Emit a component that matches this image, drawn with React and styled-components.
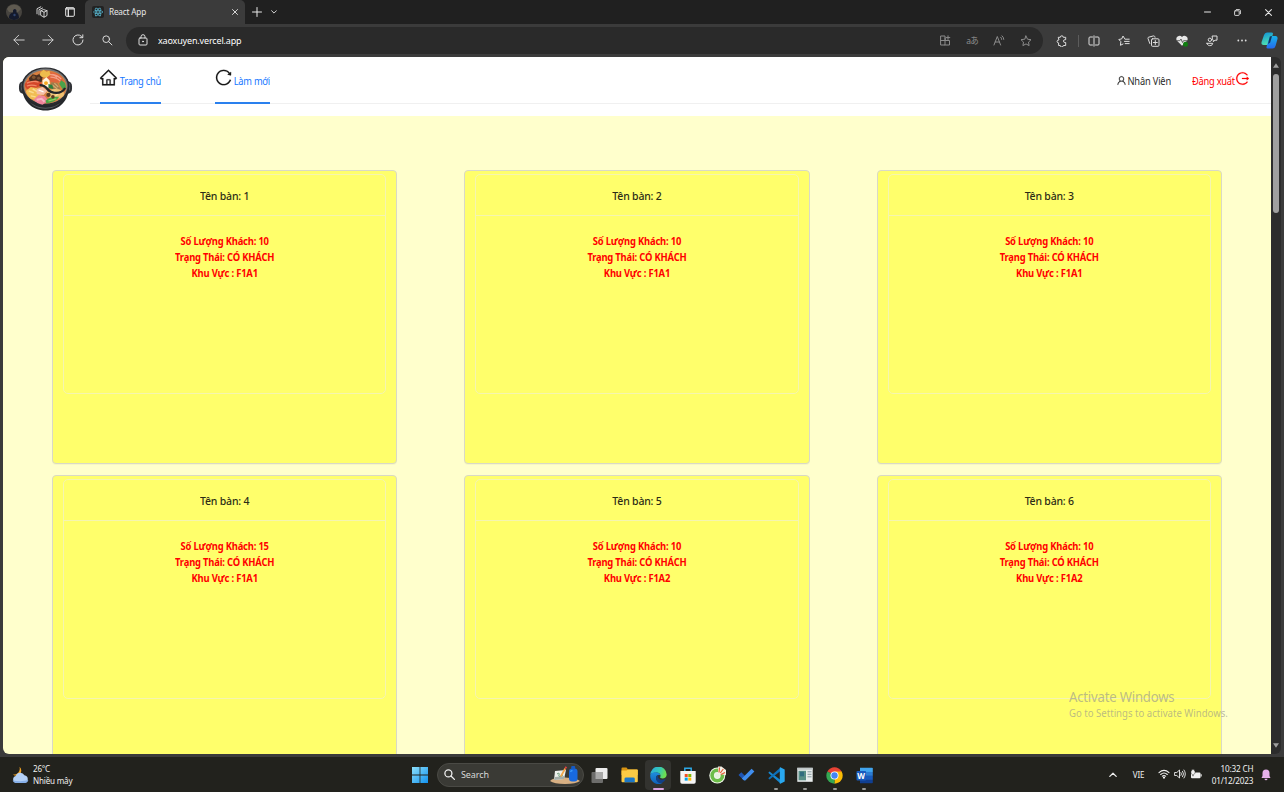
import React from "react";
import styled, { createGlobalStyle, css } from "styled-components";
import {
  AiOutlineHome,
  AiOutlineReload,
  AiOutlineUser,
  AiOutlineLogout,
} from "react-icons/ai";

const Global = createGlobalStyle`
  * { box-sizing: border-box; }
  body {
    margin: 0;
    overflow: hidden;
    background: #3b3b3b;
    font-family: "Noto Sans", "Open Sans", "Noto Sans CJK JP", sans-serif;
  }
  svg { display: block; flex: none; }
`;

const Screen = styled.div`
  width: 1284px;
  height: 792px;
  display: flex;
  flex-direction: column;
  background: #3b3b3b;
  overflow: hidden;
`;

const Label = styled.span`
  display: inline-block;
  font-size: ${(p) => p.$size || 9}px;
  letter-spacing: ${(p) => p.$track || 0}px;
  font-weight: ${(p) => p.$weight || 400};
  color: ${(p) => p.$color || "inherit"};
  line-height: ${(p) => p.$line || 12}px;
  white-space: nowrap;
  transform: scaleY(1.08);
`;

/* ---------- Browser chrome ---------- */

const TabStrip = styled.header`
  height: 24px;
  display: flex;
  align-items: stretch;
  background: #202020;
  color: #e8e8e8;
`;

const Cell = styled.div`
  width: ${(p) => p.$w}px;
  flex: none;
  display: flex;
  align-items: center;
  justify-content: center;
  color: ${(p) => p.$color || "inherit"};
`;

const Tab = styled.div`
  width: 160px;
  display: flex;
  align-items: center;
  background: #3b3b3b;
  border-radius: 5px 5px 0 0;
  padding: 0 7px 0 7px;
`;

const TabTitle = styled(Label)`
  flex: 1;
  margin-left: 5px;
`;

const Favicon = styled.div`
  width: 12px;
  height: 12px;
  border-radius: 2px;
  background: #222;
  display: flex;
  align-items: center;
  justify-content: center;
`;

const Spacer = styled.div`
  flex: 1;
`;

const Toolbar = styled.div`
  height: 33px;
  flex: none;
  display: flex;
  align-items: center;
  padding: 0 0 0 4px;
  color: #dedede;
`;

const AddressBar = styled.div`
  width: 917px;
  height: 27px;
  margin-left: 4px;
  margin-right: 4px;
  padding: 0 4px 0 2px;
  border-radius: 14px;
  background: #2a2a2a;
  display: flex;
  align-items: center;
`;

const Divider = styled.div`
  width: 1px;
  height: 12px;
  margin: 0 1px;
  background: #5c5c5c;
`;

/* ---------- Web page ---------- */

const Viewport = styled.div`
  height: 697px;
  flex: none;
  margin: 0 3px;
  display: flex;
  border-radius: 6px;
  overflow: hidden;
  background: #2c2c2c;
`;

const Page = styled.main`
  width: 1268px;
  flex: none;
  background: #ffffcc;
  overflow: hidden;
`;

const SiteHeader = styled.div`
  height: 59px;
  background: #fff;
  display: flex;
  padding-left: 15px;
`;

const Logo = styled.div`
  width: 56px;
  padding-top: 9px;
`;

const Nav = styled.nav`
  flex: 1;
  height: 47px;
  margin-left: 16px;
  padding: 0 21px 0 10px;
  border-bottom: 1px solid #f0f0f0;
  display: flex;
`;

const NavItem = styled.a`
  height: 47px;
  margin-right: ${(p) => p.$gap || 0}px;
  width: ${(p) => p.$w}px;
  display: flex;
  align-items: flex-start;
  justify-content: space-between;
  color: #1677ff;
  border-bottom: 2px solid #2a80ee;
  svg {
    color: #1a1a1a;
    stroke-width: 8px;
    margin: 11px -2px 0 -1px;
  }
  ${Label} { margin-top: 18.5px; }
`;

const UserItem = styled.div`
  display: flex;
  align-items: flex-start;
  justify-content: space-between;
  width: ${(p) => p.$w}px;
  margin-left: ${(p) => p.$gap || 0}px;
  color: ${(p) => p.$color};
  svg { margin-top: ${(p) => p.$top}px; stroke-width: 14px; }
  ${Label} { margin-top: 18.5px; }
`;

const Tables = styled.section`
  display: grid;
  grid-template-columns: repeat(3, 345.4px);
  grid-auto-rows: 294px;
  column-gap: 66.9px;
  row-gap: 11px;
  padding: 54px 0 0 49px;
`;

const TableButton = styled.article`
  background: #ffff6b;
  border: 1px solid #d9d9c6;
  border-radius: 4px;
  box-shadow: 0 1px 0 rgba(0, 0, 0, 0.03);
  padding: 3px 10px 0;
`;

const TableCard = styled.div`
  height: 220px;
  border: 1px solid #f5f5b0;
  border-radius: 5px;
  text-align: center;
`;

const CardHead = styled.div`
  height: 41px;
  border-bottom: 1px solid #f5f5b0;
  display: flex;
  align-items: center;
  justify-content: center;
  padding-top: 1px;
`;

const CardBody = styled.div`
  display: flex;
  flex-direction: column;
  align-items: center;
  padding-top: 17.6px;
`;

const ScrollTrack = styled.div`
  flex: 1;
  display: flex;
  flex-direction: column;
  align-items: center;
  justify-content: space-between;
  padding: 6px 0 6px;
`;

const Thumb = styled.div`
  width: 6px;
  height: 139px;
  margin: 6px 0 auto;
  border-radius: 3px;
  background: #9f9f9f;
`;

const Watermark = styled.div`
  position: absolute;
  left: 1069px;
  top: 688px;
  display: flex;
  flex-direction: column;
  align-items: flex-start;
  color: rgba(150, 150, 140, 0.65);
`;

/* ---------- Taskbar ---------- */

const Taskbar = styled.footer`
  height: 35px;
  margin-top: auto;
  flex: none;
  display: grid;
  grid-template-columns: 405px 475px 1fr;
  background: #22221d;
  color: #f0f0f0;
`;

const Weather = styled.div`
  display: flex;
  align-items: center;
  padding-left: 12px;
  gap: 4px;
`;

const Stack = styled.div`
  display: flex;
  flex-direction: column;
  align-items: ${(p) => p.$align || "flex-start"};
`;

const Apps = styled.div`
  display: flex;
  align-items: center;
`;

const SearchBox = styled.div`
  width: 147px;
  height: 24px;
  margin: 0 1px 0 2px;
  padding: 0 3px 0 6px;
  border: 1px solid #4a4a45;
  border-radius: 12px;
  background: #3a3a35;
  display: flex;
  align-items: center;
  gap: 6px;
`;

const AppButton = styled.div`
  width: 29.4px;
  height: 30px;
  flex: none;
  display: flex;
  flex-direction: column;
  align-items: center;
  justify-content: flex-end;
  gap: 4px;
  border-radius: 4px;
  ${(p) => p.$active && css`
    background: #33332f;
    width: 26px;
    margin: 0 1.7px;
  `}
`;

const Indicator = styled.div`
  height: 2px;
  border-radius: 1px;
  width: ${(p) => (p.$state === "active" ? 11 : 4)}px;
  background: ${(p) =>
    p.$state === "active" ? "#d9a0dc" : p.$state === "open" ? "#9a9a96" : "transparent"};
`;

const Tray = styled.div`
  display: flex;
  align-items: center;
  justify-content: flex-end;
  padding-right: 12px;
`;

/* ---------- Icons ---------- */

const Line = ({ w = 12, h = w, sw = 1, box, children }) => (
  <svg width={w} height={h} viewBox={box || `0 0 ${w} ${h}`} fill="none" stroke="currentColor"
    strokeWidth={sw} strokeLinecap="round" strokeLinejoin="round">{children}</svg>
);

const Avatar = () => (
  <svg width="16" height="16" viewBox="0 0 16 16">
    <circle cx="8" cy="8" r="8" fill="#47443f" />
    <path d="M1 5a8 8 0 0 1 14 0l-3 3H3z" fill="#5f5a50" />
    <path d="M3 14c0-4 2-5 4-5.500V6.500a1.800 2 0 0 1 3.500 0V8.500C12 9 13 11 13 14a8 8 0 0 1-10 0z" fill="#141a2c" />
    <circle cx="8.500" cy="11" r="1.200" fill="#30446e" />
  </svg>
);
const Workspaces = () => (
  <Line w={12} sw={0.85}><path d="M5 4.700 7.500 3.500 11 4.700V9.500L8 11.200 5 9.500zM5 4.700 8 6.200 11 4.700M8 6.200V11M3 8.900V3.700L6.600 2M1 7.800V2.700L4.800.8" /></Line>
);
const TabActions = () => (
  <Line w={10}><rect x=".7" y=".7" width="8.600" height="8.600" rx="1" /><path d="M1 1.800H9M3.300 3V9" strokeWidth="1.300" /></Line>
);
const ReactMark = () => (
  <Line w={10} sw={0.7}>
    <g stroke="#58b8d2"><ellipse cx="5" cy="5" rx="4.500" ry="1.700" />
      <ellipse cx="5" cy="5" rx="4.500" ry="1.700" transform="rotate(60 5 5)" />
      <ellipse cx="5" cy="5" rx="4.500" ry="1.700" transform="rotate(120 5 5)" /></g>
    <circle cx="5" cy="5" r=".7" fill="#58b8d2" stroke="none" />
  </Line>
);
const Close = ({ s = 6 }) => <Line w={s} box="0 0 6 6" sw={0.9}><path d="M.5.5l5 5M5.500.5l-5 5" /></Line>;
const Plus = () => <Line w={10}><path d="M5 .5v9M.5 5h9" /></Line>;
const Chevron = ({ up, w = 6 }) => <Line w={w} h={w * 0.67} box="0 0 6 4" sw={0.9}><path d={up ? "M.6 3.300 3 .9l2.400 2.400" : "M.6.7 3 3.100 5.400.7"} /></Line>;
const Back = () => <Line w={12} h={13} sw={0.9}><path d="M11.200 6H1M5.700 1.200.9 6l4.800 4.800" /></Line>;
const Forward = () => <Line w={12} h={13} sw={0.9}><path d="M.8 6H11M6.300 1.200 11.100 6l-4.800 4.800" /></Line>;
const Reload = () => <Line w={12} h={13}><path d="M11 6a5 5 0 1 1-1.600-3.700L10.600 3.500M10.800.8v2.900H7.900" /></Line>;
const Search = ({ s = 11, sw = 1 }) => <Line w={s} box="0 0 11 11" sw={sw}><circle cx="4.400" cy="4.400" r="3.500" /><path d="M7 7l3.400 3.400" /></Line>;
const Lock = () => (
  <Line w={10} h={13}><rect x="1" y="4" width="8" height="7" rx="1" /><path d="M3 4V2.700a2 2 0 0 1 4 0V4" /><circle cx="5" cy="7.500" r=".5" fill="currentColor" /></Line>
);
const AddApp = () => <Line w={11}><path d="M1 1h4v9H1zM1 5.500h8.500V10H5M5.200 5.500V3M8 .8v3.600M6.200 2.600h3.600" /></Line>;
const ReadAloud = () => <Line w={12} h={11}><path d="M1 10 4.300 1.500 7.600 10M2.200 7h4.200M7.700 2.200q1 .9 1 2.200M9 .8q1.800 1.400 1.800 3.600" /></Line>;
const STAR = "M6 1l1.500 3.200 3.500.5-2.500 2.400.6 3.500L6 8.900l-3.100 1.700.6-3.500L1 4.700l3.500-.5z";
const Star = () => <Line w={12}><path d={STAR} /></Line>;
const Puzzle = () => <Line w={11} h={12}><path d="M2.600 2.300h1.700a1.500 1.500 0 0 1 3 0h2.400v2.400h-.8a1.400 1.400 0 0 0 0 2.800h.8v3H7.300a1.500 1.500 0 0 1-3 0H2.600V7.900a1.500 1.500 0 0 1 0-3z" /></Line>;
const Split = () => <Line w={12}><path d="M4.500 2H2a1 1 0 0 0-1 1v6a1 1 0 0 0 1 1h2.500M7.500 2H10a1 1 0 0 1 1 1v6a1 1 0 0 1-1 1H7.500M6 .8v10.400" /></Line>;
const Favorites = () => <Line w={12}><path d="M6.600 3.600 5 1 3.700 3.900.8 4.500l2.100 2.200-.5 3.600L5 9M7.200 4.200h4M6.500 6.400h4.700M7.200 8.600h4" /></Line>;
const Collections = () => <Line w={13} h={12}><rect x="4.500" y="3.800" width="7.500" height="7.500" rx="1" /><path d="M8.300 5.500v4M6.300 7.500h4M2.800 8.500 1 3.500a1 1 0 0 1 .7-1.300L6.500.9a1 1 0 0 1 1.200.6L8 2.300" /></Line>;
const Health = () => (
  <svg width="13" height="12" viewBox="0 0 13 12"><path d="M6 10.800 1.200 6A2.900 2.900 0 0 1 6 2a2.900 2.900 0 0 1 4.800 4z" fill="#e6e6e6" />
    <path d="M1 5.700h2.800L5 4l1.500 3.500 1-1.800H11" stroke="#444" fill="none" strokeWidth=".8" /><circle cx="9.500" cy="9.300" r="2.500" fill="#107c10" /></svg>
);
const Share = () => <Line w={12}><circle cx="3.900" cy="4.800" r="1.700" /><path d="M1 8.300h5.700c0 3.200-5.700 3.200-5.700 0zM6.500 1h4.500v4.200H9L7.300 6.700V5.200q-.8-.2-.8-1z" /></Line>;
const Dots = () => <svg width="10" height="3" viewBox="0 0 10 3" fill="currentColor"><circle cx="1.300" cy="1.500" r=".9" /><circle cx="5" cy="1.500" r=".9" /><circle cx="8.700" cy="1.500" r=".9" /></svg>;
const Copilot = () => (
  <svg width="17" height="17" viewBox="0 0 17 17">
    <defs>
      <linearGradient id="cpa" x1="0" y1="0" x2=".3" y2="1"><stop offset="0" stopColor="#0d8fd8" /><stop offset="1" stopColor="#4fe0b0" /></linearGradient>
      <linearGradient id="cpb" x1="0" y1="0" x2="0" y2="1"><stop offset="0" stopColor="#18b4ea" /><stop offset="1" stopColor="#2468ee" /></linearGradient>
    </defs>
    <path d="M6 .5h4.500q2 0 1.300 2L9 11q-.8 2-2.800 2H2.500Q-.2 13 .6 10L3 3Q3.800.5 6 .5z" fill="url(#cpa)" />
    <path d="M11 4h3.500q2.500 0 2 3l-2 7q-.8 2.500-3 2.500H6.800q-1.800 0-1.200-2L8.300 6q.7-2 2.700-2z" fill="url(#cpb)" />
    <path d="M8.800 4.500 7 12l2.200-1.500L11 4z" fill="#14355e" />
  </svg>
);
const Minimize = () => <Line w={7} h={2}><path d="M.5 1h6" /></Line>;
const Restore = () => <Line w={7} sw={0.9}><rect x=".6" y="1.800" width="4.600" height="4.600" rx=".6" /><path d="M2.300.6h2.900a1.200 1.200 0 0 1 1.200 1.200v2.900" /></Line>;
const ArrowHead = ({ down }) => <svg width="6" height="5" viewBox="0 0 6 5"><path d={down ? "M0 .3h6L3 4.800z" : "M0 4.800h6L3 .3z"} fill="#9f9f9f" /></svg>;

const HotPot = () => (
  <svg width="55" height="46" viewBox="0 0 56 46">
    <rect x="1" y="15" width="54" height="13" rx="5" fill="#303236" />
    <path d="M3 18q2-3 4-1v8q-3 1-4-2zM53 18q-2-3-4-1v8q3 1 4-2z" fill="#65686c" />
    <path d="M4 20c0 15 10 25 24 25s24-10 24-25z" fill="#25272b" />
    <path d="M12 36c4 4 9 6 16 6s12-2 16-6c-4 5-9 7-16 7s-12-2-16-7z" fill="#5a5d61" />
    <ellipse cx="28" cy="20.500" rx="24.500" ry="19.500" fill="#292b2f" />
    <ellipse cx="28" cy="20" rx="22.500" ry="17.800" fill="#77787a" />
    <ellipse cx="28" cy="20.800" rx="21.500" ry="17" fill="#d9803f" />
    <path d="M7 18q5-8 14-6l4 7-12 5q-6 0-6-6z" fill="#d4472a" />
    <path d="M30 6q13-1 17 9l-10 2-8-3z" fill="#e0653c" />
    <path d="M35 8q6 1 9 5M33 11q6 0 10 4M32 8q5 0 8 3" stroke="#f5a088" strokeWidth="1.300" fill="none" />
    <path d="M9 17q6-3 12-1M9 20q5-2 10 0" stroke="#f08a68" strokeWidth="1.200" fill="none" />
    <path d="M11 12l4-4 4 1 4-2 2 4-1 5-6-2-6 1z" fill="#4c3020" />
    <circle cx="16" cy="11" r="1.800" fill="#85562f" /><circle cx="21" cy="12" r="1.500" fill="#785035" />
    <path d="M23 6l3-2.500 3 2 3-1 1 4-4 3-5-1-2-2z" fill="#eebc4d" />
    <path d="M8 25l5-4 6 1 6 6-6 7-6-2q-4-3-5-8z" fill="#f1bd54" />
    <path d="M11 25l5 2m-3 3 5 1m-3-8 5 3" stroke="#fadc8d" strokeWidth="1.500" />
    <path d="M25 14l4-3 3 3 1 7-4 2-4-3z" fill="#fff3dc" /><circle cx="28.500" cy="17" r="2" fill="#f4a71d" />
    <path d="M19 23l6-2 5 4-4 4-7-1z" fill="#f6c0a8" /><path d="M21 24l5 2" stroke="#fff" strokeWidth="1.300" />
    <path d="M34 16l6 1 3 6-4 3-6-3z" fill="#a07a4c" /><path d="M35 19l5 4m-3-6 4 4" stroke="#d6ac6e" strokeWidth="1.200" />
    <path d="M44 14l4 3 1 5-3 2-2-3-2-3z" fill="#4aa24b" /><path d="M31 18l4 1 1 4-5-1z" fill="#2f7f3c" />
    <ellipse cx="38" cy="28" rx="9" ry="5" fill="#f0c070" />
    <path d="M34 28l4-3m0 5 5-4" stroke="#fbe0a6" strokeWidth="1.300" />
    <path d="M16 34l5-5 6 1 4 5-6 4q-6-1-9-5z" fill="#f0859b" /><path d="M19 34l5-1 3 3" stroke="#f8b6c3" strokeWidth="2" fill="none" />
    <path d="M28 35q5-5 14-4-4 6-13 6.500z" fill="#4aa444" /><path d="M31 35l8-2" stroke="#92cf5f" strokeWidth="1.300" />
    <circle cx="31" cy="29" r="2.200" fill="#5a3822" /><circle cx="35.500" cy="31" r="1.800" fill="#5a3822" />
    <path d="M22 19q5 0 8 4t9 4 9-5" stroke="#232529" strokeWidth="2.400" fill="none" />
  </svg>
);

const WeatherIcon = () => (
  <svg width="17" height="18" viewBox="0 0 17 18">
    <path d="M7.500.8a5 5 0 1 1-6.500 7.700A6 6 0 0 0 7.500.8z" fill="#f3a323" />
    <path d="M4 17a3.600 3.600 0 0 1-.2-7 4.600 4.600 0 0 1 8.600-.7A3.900 3.900 0 0 1 12.600 17z" fill="#b4d0f6" />
    <path d="M.6 14.500A4 4 0 0 0 4 17h8.600a3.800 3.800 0 0 0 3.700-3q-6 2-15.700.5z" fill="#86afe8" />
  </svg>
);
const Start = () => (
  <svg width="16" height="16" viewBox="0 0 16 16">
    <defs><linearGradient id="st" x1="0" y1="0" x2="1" y2="1"><stop offset="0" stopColor="#8de0fb" /><stop offset="1" stopColor="#1292ee" /></linearGradient></defs>
    <path d="M0 0h7.600v7.600H0zM8.400 0H16v7.600H8.400zM0 8.400h7.600V16H0zM8.400 8.400H16V16H8.400z" fill="url(#st)" />
  </svg>
);
const SearchArt = () => (
  <svg width="30" height="18" viewBox="0 0 30 18">
    <path d="M0 15Q3 11 15 11.500T30 15Q26 18 15 18T0 15z" fill="#d8b083" />
    <path d="M5 5l11-1-2 9-10 1z" fill="#edf0ec" /><path d="M4 14l10-1 1-3-10 1z" fill="#a4aeaa" />
    <path d="M7 8q3-2 2 1t4 0" stroke="#6d9a78" fill="none" /><path d="M10 10 14.500 2l1.500 1-4.500 8z" fill="#f3a64a" /><path d="M14.500 2l1-1.700 1.600 1-1.100 1.700z" fill="#dd4040" />
    <rect x="19" y="2.500" width="8.500" height="13" rx="3" fill="#1769df" /><rect x="21.200" y="0" width="4" height="3.500" rx="1" fill="#155ac5" /><path d="M20.500 6q.5-1.500 2-1.500" stroke="#399bfa" strokeWidth="1.300" fill="none" />
  </svg>
);
const TaskView = () => (
  <svg width="17" height="17" viewBox="0 0 17 17"><rect x="4.500" y="1" width="12" height="11" rx="1" fill="#ececec" /><rect x=".5" y="5" width="11.500" height="11" rx="1" fill="#6d6d6b" /><path d="M4.500 5H12v7H4.500z" fill="#a9a9a8" /></svg>
);
const Explorer = () => (
  <svg width="17" height="17" viewBox="0 0 17 17"><path d="M.5 1.500q0-1 1-1h4l1.500 2H16q.8 0 .8 1V8H.5z" fill="#d99412" /><path d="M.5 3.500h5L7 2.500h9q.8 0 .8.800v11q0 1-1 1H1.500q-1 0-1-1z" fill="#fbcb45" /><path d="M3.500 15.300v-3.500q0-1.300 1.500-1.300h7.300q1.500 0 1.500 1.300v3.500z" fill="#1c78c8" /></svg>
);
const Edge = () => (
  <svg width="17" height="17" viewBox="0 0 17 17">
    <defs><linearGradient id="eg" x1="0" y1="0" x2="1" y2=".3"><stop offset="0" stopColor="#29a8e4" /><stop offset=".6" stopColor="#35c8b4" /><stop offset="1" stopColor="#6ddd50" /></linearGradient>
      <linearGradient id="eb" x1="0" y1="0" x2="0" y2="1"><stop offset="0" stopColor="#1e8ede" /><stop offset="1" stopColor="#1060b6" /></linearGradient></defs>
    <path d="M.3 8A8.200 8.200 0 0 1 16.700 7.500c0 2.800-2 4-4.200 4-2 0-2.800-.8-2.200-1.700C11.200 8 9.500 5.500 6.500 5.500 3 5.500.6 6.800.3 8z" fill="url(#eg)" />
    <path d="M.3 8c.5-1.600 2.800-2.700 5-2.700 2.500 0 4.600 1.200 5 3-2-.9-4.300 0-4.300 2.700 0 3 3.500 5.500 6.500 5A8.200 8.200 0 0 1 .3 8z" fill="url(#eb)" />
    <path d="M6 11c0-1.600.8-2.700 2.400-3C7 10.500 9 12.800 12 12.800c1.500 0 2.800-.4 3.700-.8A8.200 8.200 0 0 1 12 16C8.500 16.500 6 13.800 6 11z" fill="#123f86" />
  </svg>
);
const Store = () => (
  <svg width="16" height="17" viewBox="0 0 16 17"><path d="M4.800 4V1.200h6.400V4" stroke="#2da8e5" strokeWidth="1.500" fill="none" /><path d="M.3 4h15.400v11q0 1.700-1.700 1.700H2Q.3 16.700.3 15z" fill="#f5f5f5" /><path d="M4.700 7h3v3h-3z" fill="#f25022" /><path d="M8.300 7h3v3h-3z" fill="#7fba00" /><path d="M4.700 10.600h3v3h-3z" fill="#00a4ef" /><path d="M8.300 10.600h3v3h-3z" fill="#ffb900" /></svg>
);
const CocCoc = () => (
  <svg width="17" height="18" viewBox="0 0 17 18"><circle cx="8.300" cy="9.500" r="8" fill="#eef5e7" /><circle cx="8.300" cy="9.500" r="5.200" fill="none" stroke="#6cbd48" strokeWidth="3.600" /><circle cx="8.300" cy="9.500" r="2.300" fill="#e4f3dc" /><path d="M9 8 9 .5h3.500L17 4v5z" fill="#f3efe4" /><path d="M10 6.500l.5-5M11.300 7l3-4M12 8.500l4-2" stroke="#e45b35" strokeWidth="1.200" /></svg>
);
const Todo = () => (
  <svg width="17" height="17" viewBox="0 0 17 17"><path d="M.5 8 3.300 5.200 8.300 10.200 5.500 13z" fill="#1d55b5" /><path d="M5.500 13 3.900 11.500 13.600 1.700l2.800 2.800L7.900 13q-1.200 1-2.400 0z" fill="#408eee" /></svg>
);
const Code = () => (
  <svg width="17" height="17" viewBox="0 0 17 17"><path d="M1.500 4.500 12.500 13v3.500L.5 6q-.3-.7 1-1.500z" fill="#1687cf" /><path d="M1.500 12.500 12.500 4V.5L.5 11q-.3.7 1 1.500z" fill="#0d70b8" /><path d="M12.300.3 16.700 2.500v12l-4.400 2.200q-.8 0-.5-1V1.300q-.2-1 .5-1z" fill="#29a8ef" /></svg>
);
const WindowApp = () => (
  <svg width="16" height="17" viewBox="0 0 16 17"><rect x=".3" y=".8" width="15.400" height="14" fill="#e9eded" /><path d="M.3.8h15.400v2H.3z" fill="#c1c8c9" /><path d="M1.500 3.800h7.500v9.500H1.500z" fill="#598f87" /><path d="M3 4.800h4v4.500H3z" fill="#326d80" /><path d="M10.500 4.800h4M10.500 7.300h4M10.500 9.800h4" stroke="#87989d" /></svg>
);
const Chrome = () => (
  <svg width="17" height="17" viewBox="0 0 17 17"><path d="M8.500 8.500 1.400 4.400a8.200 8.200 0 0 1 14.200 0z" fill="#e94335" /><path d="M8.500 8.500 15.600 4.400A8.200 8.200 0 0 1 8.500 16.700z" fill="#fbbc05" /><path d="M8.500 8.500V16.700A8.200 8.200 0 0 1 1.400 4.400z" fill="#34a853" /><path d="M8.500 4.500h7.200l-.1 0-3.300 6-3.800 6.200 2-5z" fill="#fbbc05" /><circle cx="8.500" cy="8.500" r="4" fill="#fff" /><circle cx="8.500" cy="8.500" r="3.200" fill="#4285f4" /></svg>
);
const WordMark = styled.span`
  position: absolute;
  left: 1px;
  top: 4px;
  width: 9px;
  text-align: center;
  font-size: 8px;
  font-weight: 700;
  line-height: 9px;
  color: #fff;
`;
const WordWrap = styled.div`
  position: relative;
`;
const Word = () => (
  <WordWrap>
    <svg width="17" height="17" viewBox="0 0 17 17"><path d="M4 .8h12q.8 0 .8.800v3.300H4z" fill="#41a5ee" /><path d="M4 4.900h12.800v4H4z" fill="#2b7cd3" /><path d="M4 8.900h12.800v4H4z" fill="#185abd" /><path d="M4 12.900h12.800V15.500q0 .8-.8.800H4z" fill="#103f91" /><rect x=".5" y="4" width="9.500" height="9.500" rx=".8" fill="#185abd" /></svg>
    <WordMark>W</WordMark>
  </WordWrap>
);
const Wifi = () => <Line w={12} h={12} sw={1.100}><path d="M1 3.600q5-4.600 10 0M2.700 5.500q3.300-3 6.600 0M4.400 7.200q1.600-1.400 3.200 0" /><circle cx="6" cy="8.600" r=".6" fill="currentColor" /></Line>;
const Speaker = () => <Line w={12} h={12} sw={0.9}><path d="M1 3.500h1.800L5.500 1v8L2.800 6.500H1zM7 3.600q1 1.400 0 2.800M8.600 2.300q2 2.700 0 5.400M10 1q2.800 4 0 8" /></Line>;
const Battery = () => <svg width="12" height="12" viewBox="0 0 12 12" fill="currentColor"><path d="M2 3.500h7.500q1 0 1 1v3.800q0 1-1 1H2q-1 0-1-1V4.500q0-1 1-1zM10.800 5.200h.9v2.400h-.9z" /><path d="M1.800.5v1.300H1v2Q1 5.300 2.600 5.500V7h.8V5.500Q5 5.300 5 3.800v-2h-.8V.5z" stroke="#22221d" strokeWidth=".4" /></svg>;
const Bell = () => <svg width="10" height="12" viewBox="0 0 10 12" fill="#e6b0ea"><path d="M5 .5a3.500 3.500 0 0 1 3.500 3.500v3L9.500 9H.5l1-2V4A3.500 3.500 0 0 1 5 .5zM3.500 9.800h3a1.500 1.500 0 0 1-3 0z" /></svg>;

/* ---------- Data ---------- */

const tables = [
  { id: 1, guests: 10, area: "F1A1" },
  { id: 2, guests: 10, area: "F1A1" },
  { id: 3, guests: 10, area: "F1A1" },
  { id: 4, guests: 15, area: "F1A1" },
  { id: 5, guests: 10, area: "F1A2" },
  { id: 6, guests: 10, area: "F1A2" },
];

const apps = [
  { icon: TaskView },
  { icon: Explorer },
  { icon: Edge, state: "active" },
  { icon: Store },
  { icon: CocCoc },
  { icon: Todo },
  { icon: Code, state: "open" },
  { icon: WindowApp, state: "open" },
  { icon: Chrome, state: "open" },
  { icon: Word, state: "open" },
];

const DetailLine = ({ children }) => (
  <Label $size={9.4} $track={-0.17} $weight={700} $line={16.1} $color="#ff0000">{children}</Label>
);

export default function App() {
  return (
    <Screen>
      <Global />
      <TabStrip>
        <Cell $w={28}><Avatar /></Cell>
        <Cell $w={27}><Workspaces /></Cell>
        <Cell $w={30}><TabActions /></Cell>
        <Tab>
          <Favicon><ReactMark /></Favicon>
          <TabTitle $size={8.2} $track={-0.18}>React App</TabTitle>
          <Close />
        </Tab>
        <Cell $w={24}><Plus /></Cell>
        <Cell $w={9}><Chevron /></Cell>
        <Spacer />
        <Cell $w={30}><Minimize /></Cell>
        <Cell $w={31}><Restore /></Cell>
        <Cell $w={31}><Close s={7} /></Cell>
      </TabStrip>
      <Toolbar>
        <Cell $w={29.5}><Back /></Cell>
        <Cell $w={29.5}><Forward /></Cell>
        <Cell $w={29.5}><Reload /></Cell>
        <Cell $w={29.5}><Search s={10.5} /></Cell>
        <AddressBar>
          <Cell $w={30}><Lock /></Cell>
          <Label $size={9} $track={-0.16} $color="#fff">xaoxuyen.vercel.app</Label>
          <Spacer />
          <Cell $w={26.8} $color="#8c8c8c"><AddApp /></Cell>
          <Cell $w={26.8} $color="#8c8c8c"><Label $size={8.5} $track={-0.8}>aあ</Label></Cell>
          <Cell $w={26.8} $color="#8c8c8c"><ReadAloud /></Cell>
          <Cell $w={26.8} $color="#8c8c8c"><Star /></Cell>
        </AddressBar>
        <Cell $w={29.5}><Puzzle /></Cell>
        <Divider />
        <Cell $w={29.5}><Split /></Cell>
        <Cell $w={29.5}><Favorites /></Cell>
        <Cell $w={29.5}><Collections /></Cell>
        <Cell $w={29.5}><Health /></Cell>
        <Cell $w={29.5}><Share /></Cell>
        <Cell $w={29.5}><Dots /></Cell>
        <Cell $w={26}><Copilot /></Cell>
      </Toolbar>

      <Viewport>
        <Page>
          <SiteHeader>
            <Logo><HotPot /></Logo>
            <Nav>
              <NavItem $w={61} $gap={54}>
                <AiOutlineHome size={19} />
                <Label $size={9.3} $track={-0.24}>Trang chủ</Label>
              </NavItem>
              <NavItem $w={55}>
                <AiOutlineReload size={19} />
                <Label $size={9.3} $track={-0.24}>Làm mới</Label>
              </NavItem>
              <Spacer />
              <UserItem $w={55} $top={18} $color="#2b2b2b">
                <AiOutlineUser size={11} />
                <Label $size={9.3} $track={-0.18}>Nhân Viên</Label>
              </UserItem>
              <UserItem $w={58} $gap={21} $top={14} $color="#ff0000">
                <Label $size={9.3} $track={-0.24}>Đăng xuất</Label>
                <AiOutlineLogout size={15} />
              </UserItem>
            </Nav>
          </SiteHeader>
          <Tables>
            {tables.map((t) => (
              <TableButton key={t.id}>
                <TableCard>
                  <CardHead>
                    <Label $size={10.5} $track={-0.2} $weight={500} $color="#2c2c16">Tên bàn: {t.id}</Label>
                  </CardHead>
                  <CardBody>
                    <DetailLine>Số Lượng Khách: {t.guests}</DetailLine>
                    <DetailLine>Trạng Thái: CÓ KHÁCH</DetailLine>
                    <DetailLine>Khu Vực : {t.area}</DetailLine>
                  </CardBody>
                </TableCard>
              </TableButton>
            ))}
          </Tables>
        </Page>
        <ScrollTrack>
          <ArrowHead />
          <Thumb />
          <ArrowHead down />
        </ScrollTrack>
      </Viewport>

      <Watermark>
        <Label $size={13.2} $track={-0.22} $line={18}>Activate Windows</Label>
        <Label $size={9.6} $line={15}>Go to Settings to activate Windows.</Label>
      </Watermark>

      <Taskbar>
        <Weather>
          <WeatherIcon />
          <Stack>
            <Label $size={8.1} $track={-0.2} $line={11.500}>26°C</Label>
            <Label $size={8.1} $track={-0.2} $line={11.500}>Nhiều mây</Label>
          </Stack>
        </Weather>
        <Apps>
          <Cell $w={30}><Start /></Cell>
          <SearchBox>
            <Search s={11} sw={1.300} />
            <Label $size={9} $track={-0.1} $color="#d8d8d8">Search</Label>
            <Spacer />
            <SearchArt />
          </SearchBox>
          {apps.map(({ icon: Icon, state }, i) => (
            <AppButton key={i} $active={state === "active"}>
              <Icon />
              <Indicator $state={state} />
            </AppButton>
          ))}
        </Apps>
        <Tray>
          <Cell $w={22}><Chevron up w={8} /></Cell>
          <Cell $w={29}><Label $size={8} $track={-0.2}>VIE</Label></Cell>
          <Cell $w={21}><Wifi /></Cell>
          <Cell $w={12}><Speaker /></Cell>
          <Cell $w={20}><Battery /></Cell>
          <Cell $w={53}>
            <Stack $align="flex-end">
              <Label $size={8.2} $track={-0.2} $line={11.500}>10:32 CH</Label>
              <Label $size={8.2} $track={-0.2} $line={11.500}>01/12/2023</Label>
            </Stack>
          </Cell>
          <Cell $w={13}><Bell /></Cell>
        </Tray>
      </Taskbar>
    </Screen>
  );
}
